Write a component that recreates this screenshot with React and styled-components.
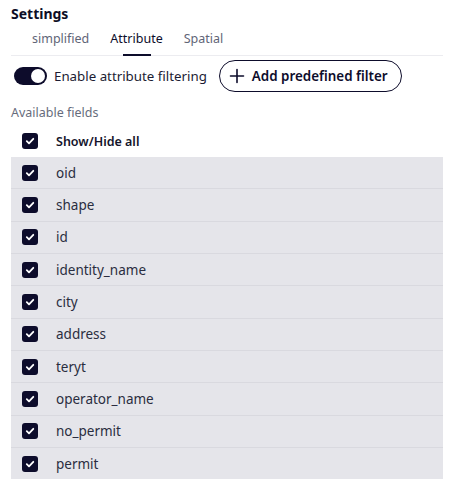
import styled, { createGlobalStyle } from "styled-components";

const Global = createGlobalStyle`
  body {
    margin: 0;
    background: #fff;
    font-family: "Noto Sans", "Open Sans", sans-serif;
    color: #14142b;
  }
`;

const Panel = styled.div`
  padding: 4px 6px 0 11px;
  width: 449px;
  box-sizing: border-box;
`;

const Title = styled.div`
  font-size: 14px;
  font-weight: 700;
  line-height: 20px;
  color: #0d0d26;
`;

const Tabs = styled.div`
  display: flex;
  padding-left: 21px;
  border-bottom: 1px solid #ececf0;
  margin-top: 5px;
`;

const Tab = styled.div`
  position: relative;
  font-size: 12.5px;
  line-height: 20px;
  padding: 0 10.5px 6px;
  color: ${(p) => (p.$active ? "#0d0d2b" : "#5f6577")};
  &:first-child { padding-left: 0; }
  ${(p) =>
    p.$active &&
    `&::after {
      content: "";
      position: absolute;
      left: 50%;
      transform: translateX(-50%);
      bottom: -1px;
      width: 28px;
      height: 2px;
      background: #0d0d2b;
    }`}
`;

const Toolbar = styled.div`
  display: flex;
  align-items: center;
  margin-top: 4px;
  padding-left: 3px;
`;

const Switch = styled.div`
  width: 33px;
  height: 18px;
  border-radius: 9px;
  background: #0d0c2b;
  position: relative;
  flex: none;
  &::after {
    content: "";
    position: absolute;
    right: 2px;
    top: 2px;
    width: 14px;
    height: 14px;
    border-radius: 50%;
    background: #fff;
  }
`;

const SwitchLabel = styled.span`
  font-size: 13.3px;
  margin-left: 7px;
  color: #1c1c33;
`;

const PillButton = styled.button`
  margin-left: 12px;
  height: 32px;
  padding: 0 13px 0 9px;
  border: 1px solid #0d0c2b;
  border-radius: 16px;
  background: #fff;
  display: flex;
  align-items: center;
  gap: 7px;
  font-family: inherit;
  font-size: 13.4px;
  font-weight: 600;
  color: #0d0c2b;
`;

const SectionLabel = styled.div`
  font-size: 12.5px;
  color: #676c7c;
  margin-top: 12px;
  line-height: 18px;
`;

const List = styled.div`
  margin-top: 3px;
`;

const Row = styled.div`
  display: flex;
  align-items: center;
  height: ${(p) => (p.$header ? "32px" : "31.33px")};
  padding-left: 11px;
  background: ${(p) => (p.$header ? "#fff" : "#e5e5ea")};
  border-bottom: ${(p) => (p.$header ? "none" : "1px solid #d9d9df")};
  width: 421px;
  box-sizing: content-box;
  &:last-child { border-bottom: none; }
`;

const Box = styled.span`
  width: 16px;
  height: 16px;
  border-radius: 3px;
  background: #0d0c2b;
  display: flex;
  align-items: center;
  justify-content: center;
  flex: none;
`;

const FieldName = styled.span`
  margin-left: 18px;
  font-size: ${(p) => (p.$header ? "12.5px" : "13.5px")};
  font-weight: ${(p) => (p.$header ? 600 : 400)};
  color: ${(p) => (p.$header ? "#14142b" : "#2a2d40")};
`;

const Check = () => (
  <Box>
    <svg width="10" height="10" viewBox="0 0 10 10">
      <path d="M1.8 5.2 L4 7.3 L8.3 2.8" fill="none" stroke="#fff" strokeWidth="1.8" strokeLinecap="round" strokeLinejoin="round" />
    </svg>
  </Box>
);

const fields = ["oid", "shape", "id", "identity_name", "city", "address", "teryt", "operator_name", "no_permit", "permit"];

export default function App() {
  return (
    <Panel>
      <Global />
      <Title>Settings</Title>
      <Tabs>
        <Tab>simplified</Tab>
        <Tab $active>Attribute</Tab>
        <Tab>Spatial</Tab>
      </Tabs>
      <Toolbar>
        <Switch />
        <SwitchLabel>Enable attribute filtering</SwitchLabel>
        <PillButton>
          <svg width="16" height="16" viewBox="0 0 16 16">
            <path d="M8 1.5V14.5M1.5 8H14.5" stroke="#0d0c2b" strokeWidth="1.6" strokeLinecap="round" />
          </svg>
          Add predefined filter
        </PillButton>
      </Toolbar>
      <SectionLabel>Available fields</SectionLabel>
      <List>
        <Row $header>
          <Check />
          <FieldName $header>Show/Hide all</FieldName>
        </Row>
        {fields.map((f) => (
          <Row key={f}>
            <Check />
            <FieldName>{f}</FieldName>
          </Row>
        ))}
      </List>
    </Panel>
  );
}
